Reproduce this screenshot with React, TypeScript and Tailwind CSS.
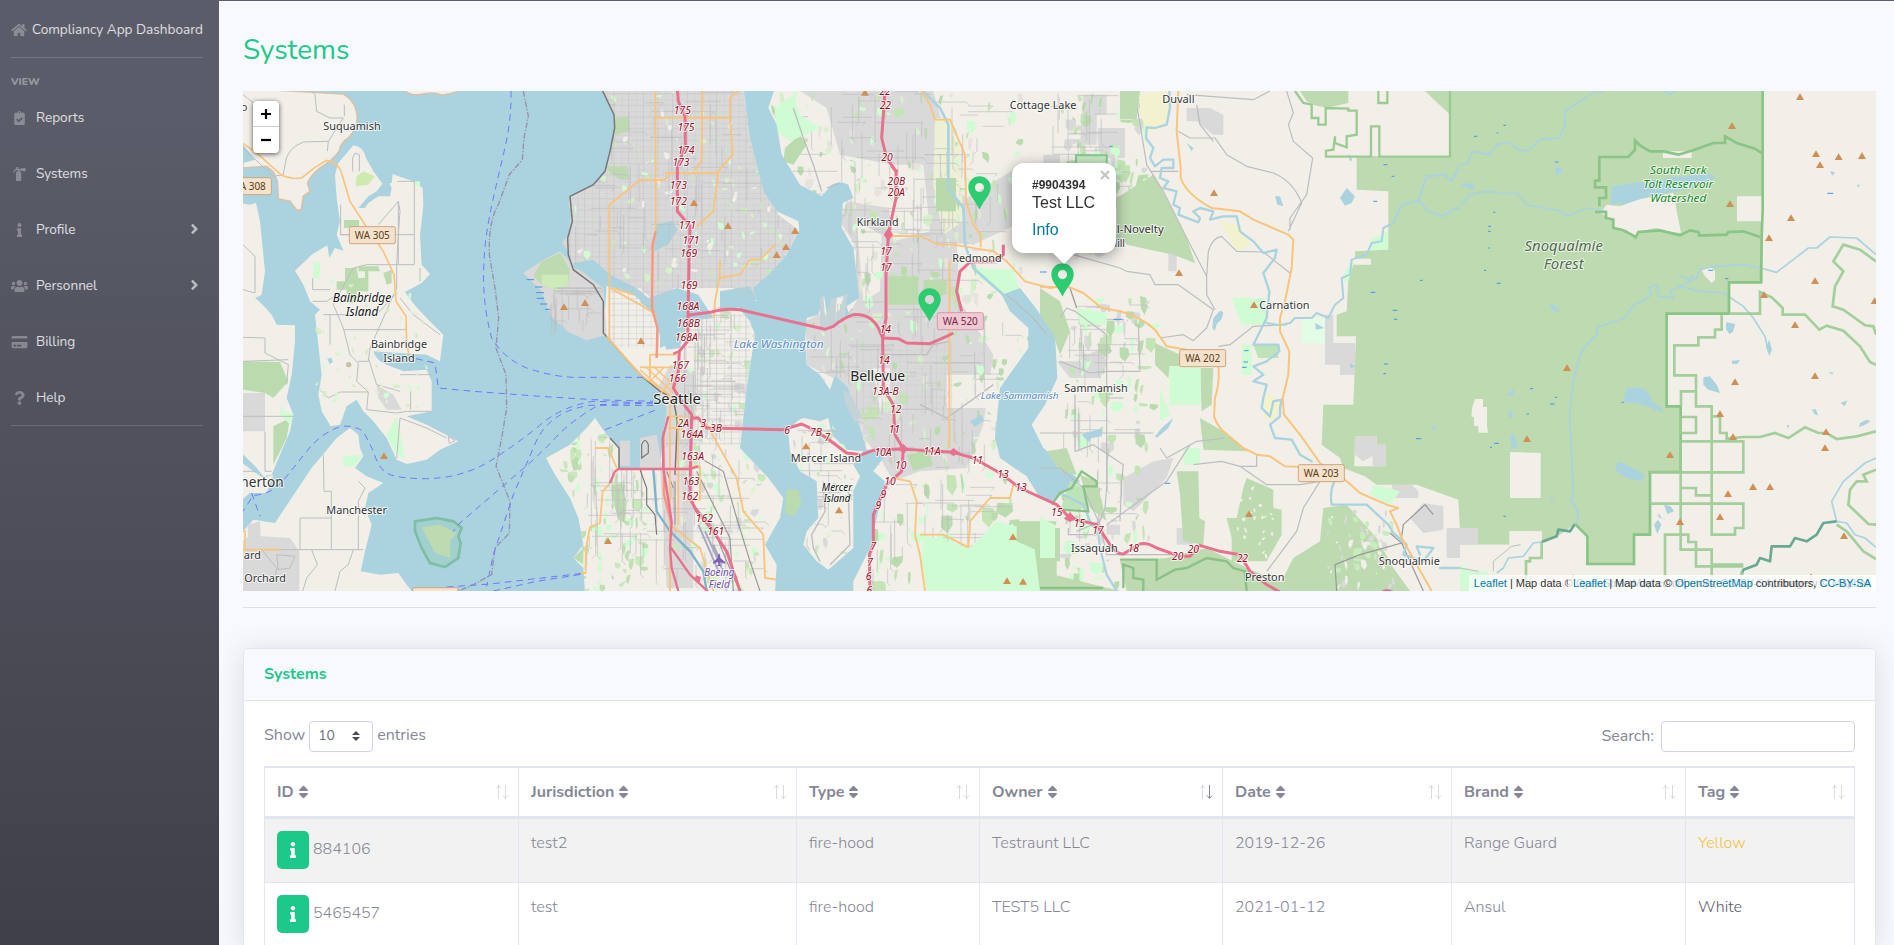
import React from "react";
import {
  FaAngleRight,
  FaClipboardCheck,
  FaCreditCard,
  FaFireExtinguisher,
  FaHome,
  FaInfo,
  FaQuestion,
  FaSort,
  FaUsers,
} from "react-icons/fa";

/* ------------------------------- Map palette ------------------------------ */
const WATER = "#aad3df";
const LAND = "#f2efe9";
const FOREST = "#bddab1";
const URBAN = "#d9d9d9";
const PARK = "#cffcd3";
const WOOD = "#b9dbae";
const STREET = "#bdbdc0";
const ORANGE = "#f9c47c";
const MOTORWAY = "#e8718d";
const BORDER = "#9bcb93";

function random(seed: number) {
  let s = seed;
  return () => {
    s = (s * 16807) % 2147483647;
    return s / 2147483647;
  };
}

type Box = [number, number, number, number];

/** Small vegetation patches spread over a box. */
function Patches({ seed, count, box, colors, size = 26 }: { seed: number; count: number; box: Box; colors: string[]; size?: number }) {
  const r = random(seed);
  const [x, y, w, h] = box;
  return (
    <g>
      {Array.from({ length: count }, (_, i) => {
        const px = x + r() * w;
        const py = y + r() * h;
        const a = 5 + r() * r() * size;
        const b = 5 + r() * size;
        const k = r() * 9 - 4;
        return (
          <path key={i} fill={colors[i % colors.length]} d={`M${px} ${py}l${a} ${k}l${k} ${b * 0.6}l${-a * 0.5} ${b * 0.5}l${-a * 0.6} ${-b * 0.4}z`} />
        );
      })}
    </g>
  );
}

/** Irregular local street segments spread over a box. */
function Streets({ seed, count, box }: { seed: number; count: number; box: Box }) {
  const r = random(seed);
  const [x, y, w, h] = box;
  let d = "";
  for (let i = 0; i < count; i++) {
    const len = 30 + r() * 110;
    const px = Math.round(x + r() * (w - len));
    const py = Math.round(y + r() * (h - len));
    const q = r() * 24 - 12;
    d += r() > 0.5 ? `M${px} ${py}h${len}l${q} ${Math.abs(q)}` : `M${px} ${py}v${len}l${q} ${Math.abs(q)}`;
  }
  return <path d={d} fill="none" stroke={STREET} strokeWidth={2.6} strokeOpacity={0.75} />;
}

type LabelProps = { x: number; y: number; size?: number; fill?: string; italic?: boolean; children: string; len?: number };

function Label({ x, y, size = 33, fill = "#333", italic, children, len }: LabelProps) {
  return (
    <text
      x={x}
      y={y}
      fontSize={size}
      fill={fill}
      fontStyle={italic ? "italic" : undefined}
      textAnchor="middle"
      textLength={len}
      lengthAdjust="spacingAndGlyphs"
      stroke="#ffffff"
      strokeOpacity={0.75}
      strokeWidth={6}
      strokeLinejoin="round"
      paintOrder="stroke"
    >
      {children}
    </text>
  );
}

function Shield({ x, y, pink, children }: { x: number; y: number; pink?: boolean; children: string }) {
  return (
    <g>
      <rect x={x - 69} y={y - 25} width={138} height={51} rx={5} fill={pink ? "#edcad4" : "#f5e2cd"} stroke={pink ? "#d999ab" : "#cfa57c"} strokeWidth={3} />
      <text x={x} y={y + 11} fontSize={30} textAnchor="middle" fill={pink ? "#7d2644" : "#5b3d12"} textLength={105} lengthAdjust="spacingAndGlyphs">
        {children}
      </text>
    </g>
  );
}

const PEAKS: [number, number][] = [
  [432, 1103], [972, 656], [1035, 644], [1203, 758], [1104, 1358],
  [1362, 344], [1464, 413], [1665, 428], [1638, 476], [1610, 500], [1698, 1074], [1797, 1266], [2319, 1346], [2301, 1478], [2349, 1480], [1875, 13],
  [2922, 314], [2817, 554], [3042, 650], [3027, 1277],
  [4680, 26], [4476, 113], [4728, 197], [4740, 230], [4796, 206], [4866, 203], [4470, 347], [4653, 389], [4587, 449], [4725, 578], [4572, 620], [4904, 638],
  [4665, 710], [3981, 839], [4725, 863], [4485, 881], [4440, 977], [4758, 1031], [4479, 1046], [4290, 1100], [3861, 1052], [4755, 1079], [4539, 1196],
  [4590, 1196], [4464, 1217], [4440, 1286], [4320, 1301], [4812, 1343], [4713, 1466], [4000, 1468],
];

const EXITS: [number, number, string][] = [
  [127, 78, "175"], [138, 128, "175"], [138, 198, "174"], [123, 233, "173"], [115, 302, "173"], [115, 352, "172"], [142, 423, "171"], [153, 467, "171"],
  [146, 507, "169"], [147, 603, "169"], [144, 665, "168A"], [145, 718, "168B"], [139, 759, "168A"], [121, 844, "167"], [112, 882, "166"],
  [130, 1016, "2A"], [190, 1016, "3"], [228, 1031, "3B"], [156, 1051, "164A"], [158, 1115, "163A"], [153, 1191, "163"], [149, 1235, "162"], [193, 1301, "162"], [227, 1342, "161"],
  [441, 1038, "6"], [528, 1043, "7B"], [562, 1059, "7"], [735, 20, "22"], [736, 63, "22"], [741, 220, "20"], [769, 290, "20B"], [769, 323, "20A"],
  [738, 502, "17"], [738, 548, "17"], [736, 736, "14"], [732, 829, "14"], [736, 920, "13A-B"], [767, 974, "12"], [763, 1034, "11"], [729, 1103, "10A"],
  [876, 1100, "11A"], [782, 1142, "10"], [750, 1190, "10"], [730, 1231, "9"], [715, 1264, "9"], [1012, 1127, "11"], [1089, 1170, "13"], [1143, 1210, "13"],
  [1250, 1283, "15"], [1318, 1318, "15"], [1374, 1338, "17"], [1480, 1393, "18"], [1613, 1415, "20"], [1660, 1395, "20"], [1807, 1423, "22"],
  [700, 1385, "7"], [690, 1433, "7"], [686, 1475, "6"], [688, 1518, "6"],
];

const NORTH_SEATTLE =
  "M1088 9L1120 80L1125 120L1110 190L1095 250L1060 290L990 325L985 350L995 370L985 440L965 465L985 490L995 530L1060 520L1110 560L1200 640L1260 655L1300 600L1480 600L1500 650L1540 640L1585 560L1640 500L1675 425L1620 385L1570 310L1530 150L1510 9Z";
const EASTSIDE =
  "M1605 9L2350 9L2350 1509L1840 1509L1890 1380L1935 1180L1900 1150L1930 1090L1860 1080L1825 900L1785 860L1770 905L1740 860L1700 830L1697 700L1735 680L1750 625L1762 700L1778 640L1815 620L1812 690L1850 640L1850 560L1840 480L1805 420L1805 350L1840 320L1820 280L1775 290L1745 325L1680 290L1625 200L1585 60Z";

function WestShore() {
  return (
    <g>
      <g fill={LAND} stroke="#d3c3ae" strokeWidth={5}>
        <path d="M0 0L310 18Q350 40 352 90Q350 125 325 150Q300 165 298 190Q275 220 240 240Q210 265 203 285L210 310L190 325L184 365L170 367L150 340L115 333L112 280L100 252L80 235L9 240Z" />
        <path d="M486 0Q505 25 540 20Q580 10 605 22Q640 18 680 0Z" />
      </g>
      <g fill={LAND}>
        <path d="M0 345L30 350L48 345L60 400L75 550L65 620L45 630Q60 640 95 680L110 710L165 712L165 760L155 860L140 930L160 980L150 1030L120 1100L95 1160L70 1165L50 1140L0 1090Z" />
        <path d="M0 1120L40 1150L70 1170L100 1160L80 1215L30 1215L0 1240Z" />
        <path d="M340 172Q370 175 378 210L400 250L430 290L455 285L458 258L475 265L520 280L548 300L550 350L545 400L540 440L545 530L570 558L545 585L495 612Q520 650 560 690L610 740L600 820L560 800L400 790Q410 820 440 830L490 850L560 845L575 880L575 970L500 985L560 1010L655 1060L600 1085L560 1115L500 1128L470 1115L440 1050L400 1000L370 970L350 935L320 955L300 1010L272 1015L245 970L235 920L245 860L225 680L240 665L210 640L190 590L165 548L215 500L262 472L268 510L285 480L310 488L290 440L300 400L290 330L285 260L295 225Z" />
        <path d="M0 1340L40 1295L105 1305L155 1230L215 1140L290 1050L330 1020L355 1040L360 1080L370 1105L345 1140L380 1165L430 1185L385 1215L375 1260L395 1310L375 1390L362 1450L420 1460L475 1455L500 1490L520 1515L0 1515Z" />
      </g>
      <path fill={WATER} d="M355 360L385 325L410 310L440 270L455 300L450 325L415 325L385 345L375 360ZM9 170L30 195L45 215L9 225ZM262 812l12 -3l5 12l-10 8z" />
      <g fill={WOOD}>
        <path d="M312 396h45v24h-45zM315 540h35l5 30h20v-20h-20v-15h60l5 15h-35v60h-35v35h-30v-40h-30v-25h25zM430 555l25 -10v40l-15 5z" />
        <path d="M9 820L120 822L145 880L100 930L75 915L9 905ZM100 1015L150 990L140 1050L100 1130Z" />
      </g>
      <g fill={PARK}>
        <path d="M220 522h20v50h-20zM470 985l25 130l-30 -20l-25 -55zM120 960l40 20l-10 30l-30 -30zM310 1105l60 -5l-30 35l-30 0zM42 1405l45 0v60h-45zM525 280h15v15h-15z" />
        <path fill="#cdebb0" d="M350 265l20 -15l35 15l-20 25l-38 5z" />
      </g>
      <path fill={URBAN} d="M410 890L460 920L485 965L440 965L415 930ZM9 915L75 915L75 1030L9 1030ZM22 1310L60 1300L62 1345L150 1350L178 1390L178 1509L9 1509L9 1360L25 1345Z" />
      <g fill="none" stroke={STREET} strokeWidth={3}>
        <path d="M9 20L60 60M215 9L225 20L230 70L270 90L310 90M262 190L265 160L190 162Q140 180 135 230L130 260L100 265L9 180M313 50V85M265 160L310 90" />
        <path d="M9 470L45 505L45 615M9 605L45 615M9 748L75 750V795L145 830L140 890M9 820L145 815M9 985L160 985M75 1030V1150L95 1150" />
        <path d="M338 250V210L345 195L358 200V250M472 280H523V530H475V340L415 410M302 350V440H523M302 440H340M475 340L480 370L475 440L470 530L470 620M475 530L380 530L340 540L280 650L310 720L330 800L355 825L350 880L385 912L380 965L470 975L500 970L575 970M218 605V570M218 605H270M218 640H260L290 620M270 680V770M250 680H410L465 620M310 725H500M355 820H385L390 780L430 690L465 610M540 540V580M480 630L520 680L600 740M385 810L410 890L480 910M480 860H575M512 910V965M240 905L265 930L300 912H385M480 990L560 1020L620 1050M480 990L470 1110M625 1045L645 1057L628 1067Z" />
        <path d="M250 1100L252 1210H274V1385M180 1385V1290H274M9 1385H370M215 1385L232 1430L200 1470L188 1509M340 1385L325 1430L300 1450L285 1509M355 1180L375 1200L355 1240L355 1385M65 1385L110 1440L105 1480M9 1150L50 1150M110 1400L165 1405L150 1440L115 1445Z" />
      </g>
      <Patches seed={41} count={60} box={[225, 560, 330, 400]} colors={["#d5ecc6", PARK, "#e3efd4"]} size={14} />
      <g fill="none" stroke={ORANGE} strokeWidth={5}>
        <path d="M0 160L50 195L125 262Q160 275 185 270L225 238L260 217Q295 225 303 250L330 340L375 410L430 490L462 560L468 640L498 685L500 770L507 800M0 1385H120M0 1330H15V1385" />
      </g>
      <circle cx={326} cy={830} r={8} fill="#c6c3a3" />
      <path fill="#a2d0ce" stroke="#7fbda6" strokeWidth={8} d="M525 1300L590 1290L640 1300L665 1320L655 1345L662 1365L655 1410L615 1437L570 1425L545 1380L525 1330Z" />
      <path fill={FOREST} d="M545 1318L600 1310L650 1335L630 1360L632 1410L585 1395Z" />
    </g>
  );
}

function Seattle() {
  return (
    <g>
      <path fill={URBAN} d={NORTH_SEATTLE} />
      <path
        fill={LAND}
        d="M1100 590L1200 600L1260 655L1260 780L1320 750L1320 620L1480 600L1530 640L1550 740L1520 900L1500 1080L1585 1170L1630 1230L1620 1290L1575 1370L1610 1430L1605 1515L1035 1515L1030 1440L1000 1410L1030 1370L1015 1290L990 1230L945 1160L918 1110L990 1070L1040 1020L1065 990L1100 1040L1137 1075L1137 1140L1260 1140L1270 1030L1285 960L1250 905L1130 780L1090 740Z"
      />
      <path fill={URBAN} d="M960 490L910 515L850 555L905 610L930 680L980 730L1040 757L1100 740L1090 600L1000 530ZM1250 905L1290 830L1360 850L1360 1500L1280 1500L1260 1140L1200 1140L1200 1050L1250 1040L1265 1130L1280 960ZM1140 1058h30v75h-30z" />
      <path fill="#e8dbe6" d="M1275 1080L1320 1060L1330 1330L1290 1310Z" />
      <path fill={WATER} d="M1198 640L1310 600L1375 620L1420 690L1345 700L1330 740L1320 780L1280 785L1255 730L1245 680ZM1245 410l50 -10l18 25l-30 45l-40 20zM1440 610l90 -15l20 40l-60 25l-50 0zM1000 525L1060 515L1110 560L1190 600L1260 660L1240 670L1180 620L1120 600L1090 590L1060 560L1000 540Z" />
      <path fill={FOREST} d="M905 520L960 495L990 545L985 590L950 608L905 590L880 565Z" />
      <path fill="#cfeab9" d="M905 560L985 560L985 590L950 608L905 590Z" />
      <path fill={FOREST} d="M1125 90l40 -5l5 45l-45 10zM1100 235l60 0l10 40l-30 0l-30 -20zM990 1108l30 -5l5 40l-25 5zM1115 1190l30 -5l15 60l-5 60l-20 -10l-20 -70zM1640 1205l35 0l10 40l-25 40l-25 -10zM1000 1410L1030 1380V1430Z" />
      <clipPath id="north">
        <path d={NORTH_SEATTLE} />
      </clipPath>
      <g clipPath="url(#north)">
        <rect x={960} y={9} width={720} height={640} fill="url(#grid)" />
        <Patches seed={7} count={150} box={[980, 9, 680, 620]} colors={["#c9e8bb", PARK, "#f2efe9", "#d7f0cc"]} size={18} />
        <Streets seed={8} count={90} box={[980, 9, 690, 620]} />
      </g>
      <g clipPath="url(#seattleSouth)">
        <Patches seed={17} count={110} box={[960, 1030, 250, 480]} colors={["#c9e8bb", PARK, "#bfe0b2"]} size={28} />
        <Patches seed={18} count={170} box={[1300, 660, 260, 850]} colors={["#c9e8bb", PARK, URBAN, "#dff3d0"]} size={26} />
        <Streets seed={19} count={110} box={[1040, 1040, 540, 470]} />
        <Streets seed={20} count={80} box={[1330, 640, 200, 460]} />
        <rect x={1360} y={680} width={170} height={390} fill="url(#grid)" />
        <rect x={1110} y={600} width={150} height={180} fill="url(#grid)" />
      </g>
      <Streets seed={21} count={26} box={[930, 600, 160, 140]} />
      <g stroke="#777" fill="none" strokeWidth={4.5}>
        <path d="M1088 9L1122 80L1124 120L1110 190L1095 250L1060 290L990 325L997 400L983 450L985 500L1000 545L1060 590L1090 640V735L1130 780L1200 860L1260 910L1300 930L1312 1000L1305 1160M1137 1140V1080L1110 1050" />
        <path strokeWidth={3.5} d="M1200 1145L1220 1200V1250L1245 1280L1250 1340M1205 1070Q1215 1045 1225 1070V1095L1205 1110Z" />
        <path stroke="#999" d="M1380 1110L1450 1150L1490 1290L1530 1420L1560 1509M1370 1150L1470 1350L1480 1509M1340 1170L1360 1250L1420 1320L1460 1420L1500 1509M1280 1150L1300 1200M1305 1180V1310" strokeWidth={3.5} />
        <path stroke="#aaa7c4" strokeWidth={6} d="M1375 1310L1440 1460M1395 1330L1450 1450M1420 1370L1445 1430" />
      </g>
      <path fill="none" stroke="#7eb4cb" strokeWidth={7} d="M1240 1145L1250 1270L1290 1330L1350 1390L1390 1450L1400 1509" />
      <g fill="none" stroke={ORANGE} strokeWidth={5.5} strokeLinejoin="round">
        <path d="M1246 9L1247 430M1260 276H1200L1108 350V760M1110 600L1200 650L1250 680M1100 745L1200 860L1290 920V1509M1246 88L1470 90M1387 9L1385 220L1365 245M1470 90V30L1505 0M1470 90L1478 200L1435 250L1420 370L1370 415M1275 255L1435 255M1260 276H1275L1290 255M1440 515L1438 570L1500 560L1530 515L1560 515L1605 470M1438 570L1425 640L1422 690M1120 600L1180 620M1230 800H1310M1230 800V870M1200 838H1320M1370 985L1400 1010L1490 1170L1510 1270L1570 1340L1575 1470L1650 1480L1670 1509M1285 985H1340M1285 1020H1330M1340 1135H1380V1235L1340 1240M1315 990V1310M1290 1310L1380 1380L1420 1509M1065 1080H1105L1130 1140M1110 1185L1088 1210L1080 1305L1050 1318L1038 1380L1037 1455H1020" />
        <path strokeWidth={4} d="M1200 845L1290 925M1215 835L1300 915M1240 835L1310 900M1260 920L1320 845M1230 880L1270 840" />
      </g>
      <path fill="none" stroke="#ff957c" strokeWidth={7} d="M1247 430L1238 470L1236 660L1252 720L1250 810M1270 1030L1272 1220L1295 1310" />
    </g>
  );
}

function EastSide() {
  return (
    <g>
      <clipPath id="east">
        <path d={EASTSIDE} />
      </clipPath>
      <g clipPath="url(#east)">
        <path fill={URBAN} d="M1680 9L2080 9L2110 120L2080 240L2180 330L2330 240L2350 400L2200 470L2150 460L2160 640L2260 800L2230 1010L2180 1140L2040 1150L1960 1180L1920 1110L1830 1000L1800 880L1700 830L1690 690L1840 660L1850 480L1800 400L1820 340L1950 360L1960 230L1800 200L1760 60Z" />
        <path fill={LAND} d="M1850 400L1925 440L1920 610L1870 640ZM1930 230h120l20 200l-110 30zM1900 840h50v90l-30 40zM2120 860h170v100h-170z" />
        <path fill="#eef0d5" d="M2085 90h45l30 90l10 220l-60 40l-30 -150z" />
        <Patches seed={3} count={330} box={[1590, 9, 760, 1140]} colors={["#c4e4b6", PARK, WOOD, "#e6e3dd", "#d7f0cc"]} size={32} />
        <Patches seed={4} count={60} box={[1870, 1150, 470, 360]} colors={["#c4e4b6", WOOD, PARK]} size={50} />
        <Streets seed={5} count={240} box={[1610, 9, 740, 1180]} />
        <Streets seed={6} count={50} box={[1850, 1170, 480, 340]} />
        <rect x={1860} y={760} width={280} height={220} fill="url(#grid)" opacity={0.6} />
      </g>
      <path fill={WOOD} d="M1945 565h90v85h-90zM2050 575h70v45h-70zM1635 180l45 -40l20 30l-40 60l-30 -10zM2360 750l40 -60l20 60l-25 70zM2000 1100l60 -10l20 40l-60 20z" />
      <path fill="#b9d9ad" d="M2088 270h60v100h-60z" />
      <path fill={PARK} d="M1605 60L1660 20L1680 80L1740 120L1650 160L1610 130ZM2200 540L2320 545L2340 610L2280 615L2220 570ZM2050 1340L2190 1380L2270 1300L2420 1340L2420 1509L2060 1509L2045 1420Z" />
      <path fill={WOOD} d="M2330 1300h120l-30 100l-90 -40zM2380 1350h70v160h-50z" />
      <path
        fill={WATER}
        d="M2285 620L2340 600L2380 650L2445 740L2452 870L2415 950L2375 1010L2410 1080L2490 1150L2520 1180L2470 1215L2430 1245L2400 1230L2360 1165L2280 1110L2265 1050L2280 900L2365 780L2365 720L2310 670Z"
      />
      <path fill={WATER} d="M2190 1000l35 -20l5 18l-25 20zM2120 700l20 -10v20z" />
      <path
        fill={WATER}
        d="M1510 0L1605 0L1585 60L1610 110L1625 200L1680 290L1745 325L1775 290Q1800 275 1825 290L1840 330L1808 345L1805 420L1840 480L1850 560L1857 630L1820 655L1830 690L1812 690L1820 620L1790 630L1780 700L1762 690L1752 622L1735 680L1700 690L1695 760L1700 830L1740 860L1770 905L1785 860L1825 900L1840 960L1860 1020L1880 1085L1940 1080L1930 1110L1900 1150L1935 1180L1910 1290L1890 1380L1840 1480L1840 1515L1605 1515L1610 1430L1575 1370L1620 1290L1630 1230L1585 1170L1500 1080L1520 900L1545 740L1530 700L1480 640L1475 605L1550 640L1540 600L1585 560L1640 500L1678 425L1675 400L1610 370L1570 310L1530 150Z"
      />
      <path fill="#c4d3d6" d="M1740 630l10 -8l5 70l20 -60l15 -5l-5 75l30 -85l5 5l-10 80l-70 20zM1810 905l25 20l30 60l-20 20l-30 -60z" />
      <path fill={LAND} d="M1645 1035Q1660 1000 1690 990L1740 1000L1765 990L1775 1040L1820 1085L1870 1090L1840 1130L1860 1165L1840 1210L1840 1380L1765 1445L1730 1420L1690 1370L1700 1330L1735 1290L1730 1180L1680 1150L1650 1090Z" />
      <g clipPath="url(#mercer)">
        <Patches seed={12} count={46} box={[1650, 990, 190, 440]} colors={["#c9e8bb", PARK, URBAN]} size={24} />
        <Streets seed={13} count={26} box={[1660, 1000, 190, 430]} />
      </g>
      <path fill="none" stroke={STREET} strokeWidth={4} d="M1740 1420L1720 1380L1715 1340L1755 1270L1750 1180M1825 1210L1830 1370L1770 1430M1660 60L1690 150L1720 230L1745 310M1760 300L1800 285M1920 800H2060L2080 770L2130 760M2040 950L2120 990L2260 890M2300 620L2380 690L2420 740" />
      <path fill={WOOD} d="M1640 1205l35 0l10 40l-25 40l-25 -10z" />
      <path fill="none" stroke={WATER} strokeWidth={8} d="M2040 0L2100 60L2125 110L2125 300L2170 360L2175 470L2200 540L2290 620" />
      <g fill="none" stroke={ORANGE} strokeWidth={5.5} strokeLinejoin="round">
        <path d="M2040 0L2070 50L2085 95H2130L2175 200L2178 340L2200 410L2222 440V478M1955 444H2040L2095 470H2140L2260 490L2300 520L2355 580L2430 600L2460 596M2128 520V1080M1960 1170L2010 1180L2030 1240L2025 1340L2040 1400L2055 1509M2040 1340L2110 1340L2185 1378L2190 1300L2250 1230L2310 1230L2320 1190" />
      </g>
    </g>
  );
}

/* Drawn in the coordinates of the eastern half, 2400 units from the origin. */
function Foothills() {
  return (
    <g transform="translate(2400 0)">
      <g fill={URBAN}>
        <path d="M130 20h70v60h-30v90h-50zM440 60h70l40 20v60h-30l-50 -40h-30zM175 120h80v90h-80zM10 200h50v90h-50zM385 490h25v60h-25zM140 800l50 -20l10 50l-20 40h-90l-40 -50h80zM855 680h25v85h65v95h-45v-30h-45zM1055 1190h60l20 20v20h-70zM1110 1290l40 -45l60 10v70l-60 10zM250 1170l90 -50l60 -10l-20 60l-100 100l-30 -20zM410 1320h50v50h-50zM200 1310h40v30h-40zM1220 1320h60v90h-60zM170 650h40v10h-40z" />
      </g>
      <Patches seed={31} count={90} box={[60, 9, 260, 480]} colors={["#c4e4b6", WOOD, PARK, URBAN]} size={46} />
      <Patches seed={32} count={130} box={[60, 620, 270, 880]} colors={["#c4e4b6", WOOD, PARK, URBAN]} size={42} />
      <Streets seed={33} count={50} box={[10, 9, 280, 500]} />
      <Streets seed={34} count={50} box={[70, 640, 250, 760]} />
      <g fill={FOREST}>
        <path d="M240 9h60l-10 85h-50zM230 330L340 260L400 370L440 450L465 525L400 500L260 470L230 420ZM0 600L60 640L90 730L60 800L40 740L0 680ZM345 765L420 800L430 835L390 835L385 870L345 830ZM480 840h40l-5 110l-30 20zM480 990L550 1030L620 1090L490 1085ZM410 1150H475L478 1290L495 1300L490 1370L430 1360L420 1220ZM620 1170L700 1205V1260L725 1265V1340L680 1420H575V1350L560 1290H590L610 1200ZM20 1090L80 1080L110 1160L60 1150ZM120 1160L170 1180L200 1300L150 1260ZM850 1260L920 1250L1010 1350L1060 1440L1110 1509H710L760 1410L840 1360ZM240 1420L380 1410L500 1380L620 1440L720 1480L740 1509H260Z" />
        <path d="M0 1320h60v100h-60zM0 1450L240 1509H0Z" />
      </g>
      <Patches seed={35} count={22} box={[590, 1190, 120, 210]} colors={[LAND]} size={8} />
      <Patches seed={36} count={60} box={[860, 1260, 200, 230]} colors={[URBAN, "#c6edbb", LAND]} size={22} />
      <g fill={PARK}>
        <path d="M388 835h94v115h-94zM575 630h100v-30v60l10 50h-80zM605 770h30v90h-30zM110 660l90 15v35h-80zM430 1080h50v50h-50zM360 900l30 80l-30 20zM1045 430v55h-55v-30zM940 515v65h-30v-20zM1000 1190l80 20l-30 40l-60 -30zM0 1290l45 20v100h-45z" />
        <path fill="#e2fce5" d="M785 690h70v75h-70z" />
        <path fill="#c8eac4" stroke="#84c98f" strokeWidth={6} d="M108 202h92v60h-92z" />
        <path fill="#f3f2cf" d="M300 20L390 9L385 100L330 140L300 80ZM670 910l60 30l-30 60l-30 -10zM540 400l60 10l30 60l-40 20z" />
        <path fill="#bfe3b8" d="M640 770h75v40h-60zM90 1180l40 20l10 60l-80 10z" />
      </g>
      <g fill="none" stroke={STREET} strokeWidth={3.6} strokeLinejoin="round">
        <path d="M292 60L320 230L370 310L440 450L500 565L505 490Q515 450 545 445L590 490L670 492L750 555M415 130L450 150H525L560 200L620 235L700 255Q760 280 785 345L745 430M330 250H415M740 9L760 75L745 110L760 160L818 210L800 320L750 390V425M470 50L480 110L520 160M440 20L640 35L690 9M100 500L240 540L260 550L330 560L345 590L415 590L520 665L500 720L460 758L430 740L360 750M535 775L570 770L640 715L740 710M500 565V620L525 665M60 690L80 660L105 670L200 740V1200L195 1260L180 1300L110 1330M105 920V1090L160 1070L250 1130L245 1180L240 1300M200 850H300M200 930H250M0 1035H340M295 710L300 850M360 1080L380 1110L470 1060L555 1050M460 1130L545 1120L600 1135H650V1100M600 1135L680 1190H780L840 1180L790 1260L770 1330L680 1450M130 770V850M60 820L150 855L200 850M0 1140H60L130 1200L180 1310L200 1400H420M200 1310L380 1180L450 1070M85 1320V1340H170" />
        <path stroke="#999" d="M890 1509L885 1430L960 1400L1085 1365L1150 1509M1050 1335L1090 1370M1085 1345L1090 1310L1155 1250L1180 1280M90 600L110 660" />
      </g>
      <g fill="none" stroke={WATER} strokeWidth={7} strokeLinejoin="round" strokeLinecap="round">
        <path d="M388 9L390 60L380 110L345 120L320 118L318 150L340 180L330 210L345 235L370 215L400 215V240L365 240L360 270L385 280L370 300L410 310L400 350L420 360L415 380L475 403L480 390L460 370L480 360L520 370L510 395L550 385L590 385L600 430L640 460L670 495L710 485L705 510L670 555L688 610L680 690L650 750L640 770L715 770L718 790L680 820L640 835L670 860L640 880L680 890L670 930L665 960L690 985L700 940L725 935L720 960L720 985L690 1010L705 1050L755 1055L780 1100L815 1120" />
      </g>
      <g fill={WATER}>
        <path d="M900 330l20 -30l25 25l-10 20l-20 8zM520 690l20 -22l10 5l-5 20l-15 15l-5 20l-8 -8zM125 1040l60 -20v25l-30 5l-10 12zM345 1045l20 -25l35 -30l-15 30l-35 30zM705 325l15 0l10 30l-18 -5zM825 705l28 15l-25 5zM440 165l20 15l-5 10z" />
      </g>
      {/* Snoqualmie Forest */}
      <path fill={FOREST} d="M950 205L1000 204L1230 205L1230 0L1300 0L1300 1370L1262 1370L1255 1235L1130 1190L1010 1190L975 1165L910 1140L900 1110L845 1070L850 950L940 950L948 745L890 745L890 680L920 670L925 580L940 530L993 530L993 512L945 512L945 490L1045 485L1045 310L950 305Z" />
      <path fill={FOREST} d="M780 9L925 9L925 45L860 60L820 50L800 40ZM1155 9L1230 9L1230 80Z" />
      <path fill={URBAN} d="M890 765h55v95h-45v-30h-10z" />
      <path fill={LAND} d="M945 1045h65v25h28v65h-95z" />
      <path fill={URBAN} d="M945 1045h65v25h28v65h-40v-30l-30 15l-23 -20z" />
      <g fill="none" stroke={WATER} strokeWidth={6} strokeLinejoin="round" strokeLinecap="round">
        <path d="M680 705L720 712L750 705L765 690L815 690L830 675L865 690L885 650L910 630L905 570L930 560L935 515L980 500L995 465L1025 460L1030 420L1060 405L1085 350L1135 338L1160 265L1215 260L1235 280L1260 235M1135 338L1165 370L1210 385L1245 360L1260 362" />
        <path strokeWidth={7} d="M900 1160Q865 1190 875 1250L980 1250L1045 1310L1060 1335L1100 1370L1090 1400L1150 1420L1180 1380L1130 1375L1140 1400M1200 1440L1260 1440M70 1220L130 1250L150 1300L175 1340L180 1380L200 1460L230 1509" />
      </g>
      <path fill={WATER} d="M930 825l18 12l-18 3zM1170 1015l22 5l-12 8zM925 195l12 22l-8 2z" />
      <path fill="none" stroke="#3f97f0" strokeWidth={3} d="M1030 230h12M1055 265h8M1000 340h12M992 613h14M1140 577h8M1058 667h14M1062 694h10M1032 828h12M1030 857h8M1128 1052h16M220 694h28M375 1186h16M612 788h14M610 822h14M606 838h14M0 552h20M208 175h10" />
      <g fill="none" stroke={BORDER} strokeWidth={7}>
        <path d="M765 9L790 45L815 50V90H835V110H857V60L925 62V68H950V140L920 145V178L885 165V145L880 185L858 188V206H993V115H1018V206H1230V9M1015 9V45H1042V9" />
        <path d="M35 1250L60 1215L95 1200L125 1150L170 1180V1195L130 1195L145 1270L60 1265M240 1415L350 1415V1475L405 1445L440 1440L500 1410L560 1420L580 1440L615 1450L620 1509M250 1500V1430L280 1440V1470L310 1475V1509M0 1500H190" stroke="#8ac187" />
      </g>
      <g fill="none" stroke={ORANGE} strokeWidth={6} strokeLinejoin="round">
        <path d="M415 9L410 130L422 240V270Q440 320 515 360L600 370L640 395L745 440L760 455L755 540L735 640L720 690V730L748 790L745 860L728 930L732 980L780 1040L840 1125L915 1175L960 1215L1040 1250L1075 1260L1050 1270L1070 1310L1085 1350L1175 1509" />
        <path d="M0 596L90 598L130 615L185 660L240 670Q300 685 345 725L380 775L440 785M535 835Q540 880 525 930L522 985Q530 1010 550 1030L610 1080L650 1100L690 1105L735 1135L790 1137" />
      </g>
    </g>
  );
}

/* Drawn in the coordinates of the eastern edge, 3660 units from the origin. */
function EasternForest() {
  return (
    <g transform="translate(3660 0)">
      <path fill={FOREST} d="M0 0H908V583H807V677H620V955H662V1152H570V1340H522V1428H382V1345L345 1308L300 1340L245 1362V1330H148V1370H0Z" />
      <g fill={LAND}>
        <path d="M150 1092L242 1095V1230H150ZM45 933h24v24h12v55l3 22h-28l-2 -20h-12v-28h-8l3 -30zM609 190h86v20h-86zM831 325h76v75h-76zM725 545l25 -10l15 15v25l-10 10l-20 -20zM420 375L440 350L480 355L530 335L640 315L663 435L620 430L590 420L540 430L520 445L500 425L462 420L460 395Z" />
      </g>
      <path fill={URBAN} d="M0 1320h54v50h-54z" />
      <path fill={LAND} d="M0 1370h150v-40h95v140l-50 10v30H0z" />
      <path fill={PARK} d="M0 1430L40 1450L80 1450L110 1509H0Z" />
      <g fill="none" stroke={WATER} strokeWidth={5} strokeLinejoin="round">
        <path d="M0 230L25 225L35 190L90 200L110 170L145 163L180 188L205 187L240 155L298 150L315 110V70L350 45L410 9L430 12M610 9L630 18L650 9M0 355L30 320L80 310L120 315L170 315L200 350L305 370L320 385L385 360L440 370M1248 500L1190 450L1110 447L1070 480L1045 480L950 553L900 540L850 530L760 535L720 545L710 570L660 595L630 610L640 630L595 625L590 590L565 600L575 620L545 640L520 650L495 690L410 718L412 740L380 770L360 800L340 880L328 980L335 1100L340 1230L330 1240L345 1250L355 1280L350 1310M660 595L720 610L790 615L850 655L880 690L915 745L925 790M110 1455L130 1440L145 1410L190 1405L220 1365L245 1362M1248 1110L1215 1125L1150 1180L1115 1240L1130 1300L1160 1305L1185 1340L1215 1350L1248 1378M655 560L690 575L700 560" />
        <path stroke="#69a994" strokeWidth={8} d="M245 1362L290 1345L295 1325L330 1330L345 1308M845 1460L850 1445L890 1430L900 1410L930 1420L935 1375L990 1375L1005 1350L1040 1360L1070 1340L1090 1305L1130 1300" />
      </g>
      <g fill={WATER}>
        <path d="M455 295L560 280L620 270L700 262L755 258L765 270L700 300L620 315L550 330L490 350L475 345L452 350ZM5 285L40 288L45 305L30 300L8 295ZM285 240l20 -5v20l-15 8zM268 652l10 -3l20 15l-3 8l-20 -5zM500 900L545 898L570 920L575 940L605 960L612 975L560 955L525 945L490 943ZM465 1130L480 1122L555 1160L545 1180L500 1170L470 1150ZM730 868L750 865L770 890L780 915L745 905L730 890ZM798 703l28 5l-8 25l-10 5l-10 -15zM815 818l25 -2l-8 12l-15 0zM918 775l10 -20l8 30l-8 20zM140 920l20 -18v25zM145 965l12 5v20l-10 0zM150 1040l12 -5l12 48l-20 -5zM270 1235l8 -14v18zM612 1250l20 5l10 15l-20 8zM595 1275l10 15l20 8l-30 -10zM582 1310l12 -15l10 15l-12 28zM1110 250l15 3l-8 10zM1190 292l10 -3l-5 10zM1142 945l20 -8l-8 18zM1055 965l12 -2l8 20l-12 -5zM1200 1005l20 -10l12 5l-20 12l-15 5zM980 1010l8 2l-3 10zM1105 852l16 2l-5 6z" />
      </g>
      <g fill="none" stroke={BORDER} strokeWidth={8} strokeLinejoin="miter">
        <path stroke="#8bc487" d="M908 9V365L905 445L903 583H807V677H620V955H662V1152H570V1340H522V1428H382V1345L345 1308" />
        <path stroke="#8bc487" d="M418 355V330H438V298H405V278H418V207H505L525 185V158L540 172L570 190H610L655 200L695 188L760 165H795V145L830 165L885 182L905 195M405 372H438V390L460 395V420L485 425L515 440L527 448L535 432L600 427L660 442L690 427L715 432L718 443L800 440L805 432L850 430L900 447" />
        <path opacity={0.9} d="M807 677H900V612L935 628L968 660V680H1035L1078 725L1100 713L1150 728L1200 775L1230 822L1248 830M785 682V725H765V748H715V772H643V862H708V955H755V1340H825V1320H850V1247H570M663 955V910H708M662 987H708V1035H662V985M755 985H780V1035H800V1052L850 1047L900 1047L945 1035L985 1050L1035 1018L1075 1035H1100L1130 1053L1190 1045L1248 1030M662 1060H850V1153H570M662 1060V1385H755V1430H850M662 1200H708V1222H755M615 1509V1340H685V1362H708V1385M755 1385V1509M708 1385V1435H850M245 1362V1410H210V1420H198V1509M845 1509V1450M1130 1310L1160 1330L1210 1390L1248 1413M1248 1310L1225 1308L1165 1250L1170 1205L1190 1180H1220L1210 1160L1248 1145M1248 740L1240 715L1215 712L1150 665L1118 655L1125 595L1150 550L1120 520L1150 470L1200 485L1248 520" />
      </g>
      <path fill="none" stroke="#3f97f0" strokeWidth={3} d="M42 145h10M285 222h10M110 586h12M84 430h8M84 480h6M72 547h6M270 948h14M210 902h9M200 978h7M285 928h7M103 1066h14M90 1078h6M745 547h14M795 572h10M1102 316h18M485 943h6M85 415h8M100 373h6M110 135h5M130 112h8M130 1285h8" />
      <path fill="none" stroke={STREET} strokeWidth={3} d="M100 1450V1420L155 1375L182 1370M0 1440L55 1450" />
    </g>
  );
}

function Roads() {
  return (
    <g transform="translate(1200 0)" fill="none" stroke={MOTORWAY} strokeWidth={9} strokeLinejoin="round">
      <path d="M112 0L115 40L135 85L136 170L112 240V370L150 415L147 520L143 760L118 790L115 850L100 900L125 940L155 980L152 1100L150 1230L170 1270L220 1330L260 1390L300 1509" />
      <path d="M155 990L175 990L200 1020L430 1025L485 1008L520 1025L560 1050L620 1095L665 1100L700 1087L780 1083L940 1093L1000 1110L1080 1155L1140 1200L1250 1250L1290 1290L1370 1310L1410 1370Q1430 1400 1450 1398L1500 1368Q1520 1362 1550 1380L1620 1405H1650L1680 1372L1740 1390L1800 1400L1830 1450L1880 1490L1920 1512" />
      <path d="M735 9L725 150L740 210L768 250V330L745 440L738 560L738 690L728 750L730 900L760 950L765 1040L790 1083L785 1150L740 1190L700 1280L700 1370L688 1400L690 1512" />
      <path d="M143 682L215 672Q250 660 300 665L555 724L580 715Q610 690 640 680Q690 675 715 720L728 750L775 752L800 765L870 767L920 745L940 735M965 670L950 610L960 550L990 522L1060 520L1090 500V470" />
      <path d="M-90 1185L-75 1150L-65 1143L150 1143L175 1135M85 985L68 1050L70 1140L95 1300L90 1380L95 1440L115 1509M90 1375L150 1460L205 1512M118 790L100 797" strokeWidth={7} />
      <path fill={MOTORWAY} strokeWidth={0} d="M745 420l14 20l-14 20l-14 -20zM750 235l25 12l-5 12zM790 1068l15 15l-15 15l-15 -15zM940 1080l20 14l-20 10l-15 -10zM1290 1272l18 20l-18 10l-18 -10zM168 1462l15 5l-5 20l-15 -10zM2220 1512q20 -18 45 0z" />
    </g>
  );
}

function Ferries() {
  return (
    <g fill="none" stroke="#6f77ff" strokeWidth={3} strokeDasharray="20 15">
      <path d="M813 9Q815 100 790 200L760 330Q735 440 732 520Q725 640 755 750Q790 810 860 840Q950 870 1020 868H1210" />
      <path d="M528 812L585 825L595 900L700 910L900 925L1060 935L1240 940M1240 945L1060 940Q960 955 890 1020Q800 1090 740 1125Q660 1170 560 1172Q470 1172 440 1155Q415 1140 400 1090L370 1030Q330 1005 290 1020Q240 1040 200 1090L140 1165Q100 1220 40 1222L9 1270M35 1215L60 1285" />
      <path d="M1240 952L1050 952Q920 970 880 1080L820 1220L760 1400L740 1495M1240 945L1080 950Q1020 980 960 1035Q900 1100 840 1150L660 1305L640 1330M1095 1025L1250 965M620 1497L750 1488L1035 1455M760 1509L890 1480L1030 1458" />
    </g>
  );
}

function Labels() {
  return (
    <g>
      <Label x={336} y={126} len={172}>Suquamish</Label>
      <Label x={12} y={68}>o</Label>
      <Label x={366} y={641} italic fill="#111" size={36} len={175}>Bainbridge</Label>
      <Label x={366} y={683} italic fill="#111" size={36} len={98}>Island</Label>
      <Label x={477} y={780} len={168}>Bainbridge</Label>
      <Label x={477} y={822} len={94}>Island</Label>
      <Label x={350} y={1278} len={182}>Manchester</Label>
      <Label x={66} y={1197} size={42} len={130}>nerton</Label>
      <Label x={37} y={1413} len={51}>ard</Label>
      <Label x={75} y={1482} len={125}>Orchard</Label>
      <Label x={1311} y={949} size={43} fill="#222" len={143}>Seattle</Label>
      <Label x={1913} y={879} size={43} fill="#222" len={165}>Bellevue</Label>
      <Label x={1913} y={413} len={125}>Kirkland</Label>
      <Label x={2211} y={521} len={148}>Redmond</Label>
      <Label x={1758} y={1121} len={211}>Mercer Island</Label>
      <Label x={1791} y={1208} italic fill="#111" size={32} len={91}>Mercer</Label>
      <Label x={1791} y={1243} italic fill="#111" size={32} len={80}>Island</Label>
      <Label x={1438} y={1465} italic fill="#6b53a8" size={31} len={91}>Boeing</Label>
      <Label x={1438} y={1499} italic fill="#6b53a8" size={31} len={63}>Field</Label>
      <Label x={1616} y={780} italic fill="#5a8cc7" size={35} len={270}>Lake Washington</Label>
      <Label x={2339} y={932} italic fill="#5a8cc7" size={29} len={234}>Lake Sammamish</Label>
      <Label x={2409} y={63} len={200}>Cottage Lake</Label>
      <Label x={2815} y={45} len={97}>Duvall</Label>
      <Label x={2692} y={434} len={158}>ill-Novelty</Label>
      <Label x={2632} y={477} len={46}>Hill</Label>
      <Label x={3133} y={662} len={151}>Carnation</Label>
      <Label x={2568} y={913} len={190}>Sammamish</Label>
      <Label x={2563} y={1392} len={140}>Issaquah</Label>
      <Label x={3508} y={1430} len={183}>Snoqualmie</Label>
      <Label x={3074} y={1478} len={118}>Preston</Label>
      <Label x={3971} y={490} italic size={45} fill="#4f6b4a" len={235}>Snoqualmie</Label>
      <Label x={3971} y={544} italic size={45} fill="#4f6b4a" len={120}>Forest</Label>
      <Label x={4315} y={257} italic size={35} fill="#138a1c" len={170}>South Fork</Label>
      <Label x={4315} y={300} italic size={35} fill="#138a1c" len={210}>Tolt Reservoir</Label>
      <Label x={4315} y={343} italic size={35} fill="#138a1c" len={168}>Watershed</Label>
      <g transform="translate(1200 0)">
        {EXITS.map(([x, y, t], i) => (
          <Label key={i} x={x} y={y} size={31} italic fill="#960e22">
            {t}
          </Label>
        ))}
      </g>
      <path d="M1437 1396q5 5 4 14l14 12v5l-15 -5l-1 8l6 5l-8 -1l-8 1l6 -5l-1 -8l-15 5v-5l14 -12q-1 -9 4 -14z" fill="#7a62b8" />
      <Shield x={25} y={294}>WA 308</Shield>
      <Shield x={397} y={441}>WA 305</Shield>
      <Shield x={2161} y={699} pink>WA 520</Shield>
      <Shield x={2888} y={810}>WA 202</Shield>
      <Shield x={3244} y={1155}>WA 203</Shield>
      <rect x={518} y={1499} width={136} height={30} rx={4} fill="#f5e2cd" stroke="#cfa57c" strokeWidth={3} />
    </g>
  );
}

function MapCanvas() {
  return (
    <svg className="block h-full w-full font-['Noto_Sans',sans-serif]" viewBox="9 9 4899 1500" preserveAspectRatio="none">
      <defs>
        <pattern id="grid" width={44} height={35} patternUnits="userSpaceOnUse">
          <path d="M0 0H44M0 17H44M0 0V35M22 0V35" fill="none" stroke="#c6c6c8" strokeWidth={2} />
        </pattern>
        <clipPath id="seattleSouth">
          <path d="M1100 590L1250 650L1260 780L1320 750L1345 690L1480 640L1530 700L1545 740L1520 900L1500 1080L1585 1170L1630 1230L1620 1290L1575 1370L1610 1430L1605 1515L1035 1515L1030 1440L1000 1410L1030 1370L1015 1290L990 1230L945 1160L918 1110L990 1070L1040 1020L1065 990L1100 1040L1137 1075L1137 1140L1260 1140L1270 1030L1285 960L1250 905L1130 780L1090 740Z" />
        </clipPath>
        <clipPath id="mercer">
          <path d="M1645 1035Q1660 1000 1690 990L1765 990L1820 1085L1870 1090L1840 1130L1840 1380L1765 1445L1690 1370L1735 1290L1730 1180L1680 1150Z" />
        </clipPath>
      </defs>
      <rect x={0} y={0} width={4915} height={1515} fill={LAND} />
      <rect x={0} y={0} width={1290} height={1515} fill={WATER} />
      <WestShore />
      <Seattle />
      <EastSide />
      <Foothills />
      <EasternForest />
      <Roads />
      <path d="M850 9L865 85L852 150L847 215L808 260L775 350Q745 400 748 500L765 600L776 690L768 780L798 860L800 960L785 1050L768 1135L810 1240L808 1335L765 1380L755 1460L700 1490L655 1509" fill="none" stroke="#9a8fae" strokeWidth={4} strokeDasharray="18 5 4 5" />
      <Ferries />
      <path d="M860 575h22M885 597h22M888 614h24M890 631h22M900 648h22M915 664h14" stroke="#4a90e2" strokeWidth={3} />
      {PEAKS.map(([x, y], i) => (
        <path key={i} d={`M${x} ${y - 10}l12 20h-24z`} fill="#d08f55" />
      ))}
      <Labels />
    </svg>
  );
}

/* ------------------------------- Map overlay ------------------------------ */
function Pin({ className }: { className: string }) {
  return (
    <svg className={`absolute h-[34px] w-[23px] ${className}`} viewBox="0 0 23 34">
      <path fill="#2ecc71" fillRule="evenodd" d="M11.5 0.3A11.2 11.2 0 0 1 22.7 11.5C22.7 18.5 16.5 23.5 11.5 33.5C6.5 23.5 0.3 18.5 0.3 11.5A11.2 11.2 0 0 1 11.5 0.3ZM11.5 7a4.6 4.6 0 1 0 0 9.200a4.600 4.600 0 1 0 0 -9.200Z" />
    </svg>
  );
}

function SystemsMap() {
  return (
    <div className="relative h-[500px] w-full shrink-0 overflow-hidden bg-[#ddd] font-['Liberation_Sans',Arial,sans-serif]">
      <MapCanvas />
      <Pin className="left-[725px] top-[85px]" />
      <Pin className="left-[675px] top-[197px]" />
      <Pin className="left-[808px] top-[172px]" />

      <div className="absolute left-[769px] top-[72px] h-[90px] w-[104px] drop-shadow-[0_3px_7px_rgba(0,0,0,0.4)]">
        <div className="h-full rounded-xl bg-white pl-5 pt-[15px] text-base leading-5 text-[#333]">
          <p className="text-[12px] font-bold leading-[15px]">#9904394</p>
          <p>Test LLC</p>
          <a className="mt-[7px] block text-[#0078a8]">Info</a>
        </div>
        <svg className="absolute left-[41px] top-[90px] h-[11px] w-[22px]" viewBox="0 0 22 11">
          <path d="M0 0H22L11 11Z" fill="#fff" />
        </svg>
        <svg className="absolute right-[6px] top-[7px] h-[10px] w-[10px]" viewBox="0 0 10 10">
          <path d="M1 1L9 9M9 1L1 9" stroke="#c3c3c3" strokeWidth={2} />
        </svg>
      </div>

      <div className="absolute left-[10px] top-[10px] flex w-[26px] flex-col rounded bg-white shadow-[0_1px_5px_rgba(0,0,0,0.65)]">
        {["+", "−"].map((sign, i) => (
          <button key={sign} className={i === 0 ? "flex h-[26px] items-center justify-center border-b border-[#ccc]" : "flex h-[26px] items-center justify-center"}>
            <svg className="h-[10px] w-[10px]" viewBox="0 0 10 10" aria-label={sign}>
              <path d={i === 0 ? "M0 5H10M5 0V10" : "M0 5H10"} stroke="#000" strokeWidth={2.2} />
            </svg>
          </button>
        ))}
      </div>

      <p className="absolute bottom-0 right-0 h-4 overflow-hidden whitespace-nowrap bg-white/70 px-[5px] text-[11px] leading-4 text-[#333]">
        <a className="text-[#0078a8]">Leaflet</a> | Map data © <a className="text-[#0078a8]">OpenStreetMap</a> contributors, <a className="text-[#0078a8]">CC-BY-SA</a>, Imagery © <a className="text-[#0078a8]">Mapbox</a>
      </p>
      <p className="absolute bottom-0 right-0 h-4 whitespace-nowrap bg-white/70 px-[5px] text-[11px] leading-4 text-[#333]">
        <a className="text-[#0078a8]">Leaflet</a> | Map data © <a className="text-[#0078a8]">OpenStreetMap</a> contributors, <a className="text-[#0078a8]">CC-BY-SA</a>
      </p>
    </div>
  );
}

/* --------------------------------- Sidebar -------------------------------- */
const NAV = [
  { label: "Reports", icon: FaClipboardCheck },
  { label: "Systems", icon: FaFireExtinguisher },
  { label: "Profile", icon: FaInfo, more: true },
  { label: "Personnel", icon: FaUsers, more: true },
  { label: "Billing", icon: FaCreditCard },
  { label: "Help", icon: FaQuestion },
];

function Sidebar() {
  return (
    <aside className="flex w-[219px] shrink-0 flex-col bg-[linear-gradient(180deg,#5a5c69_10%,#373840_100%)] bg-[length:100%_1180px] pl-[11px] pr-4 text-[13.6px] text-white/80">
      <div className="flex h-14 items-center whitespace-nowrap pt-px">
        <FaHome className="mr-[5px] h-[14px] w-4 shrink-0 text-white/30" />
        Compliancy App Dashboard
      </div>
      <hr className="border-white/15" />
      <h2 className="mt-4 text-[10.4px] font-extrabold leading-4 text-white/40">VIEW</h2>
      <nav className="-mb-px">
        {NAV.map(({ label, icon: Icon, more }) => (
          <a key={label} className="flex h-14 items-center">
            <Icon className="mr-2 h-[14px] w-[17px] shrink-0 text-white/30" />
            {label}
            {more && <FaAngleRight className="mb-0.5 ml-auto mr-[3px] h-4 w-[11px] text-white/60" />}
          </a>
        ))}
      </nav>
      <hr className="border-white/15" />
    </aside>
  );
}

/* ---------------------------------- Table --------------------------------- */
const COLUMNS = [
  { label: "ID", width: "w-[254px]" },
  { label: "Jurisdiction", width: "w-[278px]" },
  { label: "Type", width: "w-[183px]" },
  { label: "Owner", width: "w-[243px]", sorted: true },
  { label: "Date", width: "w-[229px]" },
  { label: "Brand", width: "w-[234px]" },
  { label: "Tag", width: "w-[169px]" },
];

const ROWS = [
  { id: "884106", cells: ["test2", "fire-hood", "Testraunt LLC", "2019-12-26", "Range Guard"], tag: "Yellow", tagClass: "text-[#f6c23e]", bg: "bg-[#f2f2f2]" },
  { id: "5465457", cells: ["test", "fire-hood", "TEST5 LLC", "2021-01-12", "Ansul"], tag: "White", tagClass: "text-[#5a5c69]", bg: "bg-white" },
];

function SortArrows({ sorted }: { sorted?: boolean }) {
  return (
    <svg className="ml-auto h-4 w-4" viewBox="0 0 16 16" fill="none" stroke="#858796">
      <path d="M4.500 15V2M2 4.500L4.500 1.500L7 4.500" strokeOpacity={0.3} />
      <path d="M11.500 1V14M9 11.500L11.500 14.500L14 11.500" strokeOpacity={sorted ? 1 : 0.3} />
    </svg>
  );
}

function SystemsTable() {
  return (
    <table className="w-full table-fixed border-collapse border border-[#e3e6f0] text-left">
      <thead>
        <tr className="h-[50px] border-b-[3px] border-t-2 border-[#e3e6f0]">
          {COLUMNS.map((c) => (
            <th key={c.label} className={`${c.width} border-x border-[#e3e6f0] pl-3 pr-2 font-bold`}>
              <span className="flex items-center">
                {c.label}
                <FaSort className="ml-1 h-4 w-[11px]" />
                <SortArrows sorted={c.sorted} />
              </span>
            </th>
          ))}
        </tr>
      </thead>
      <tbody className="align-top font-light">
        {ROWS.map((row) => (
          <tr key={row.id} className={`h-[65px] border-b border-[#e3e6f0] ${row.bg}`}>
            <td className="border-x border-[#e3e6f0] p-3">
              <span className="flex items-center">
                <button className="mr-1 flex h-[38px] w-8 items-center justify-center rounded-[5px] bg-[#1cc88a] text-white">
                  <FaInfo className="h-4 w-4" />
                </button>
                <span className="-mt-0.5">{row.id}</span>
              </span>
            </td>
            {row.cells.map((cell, i) => (
              <td key={i} className="border-x border-[#e3e6f0] p-3">
                {cell}
              </td>
            ))}
            <td className={`border-x border-[#e3e6f0] p-3 ${row.tagClass}`}>{row.tag}</td>
          </tr>
        ))}
      </tbody>
    </table>
  );
}

export default function App() {
  return (
    <div className="flex h-[945px] flex-col overflow-hidden border-t border-[#5a5c69] bg-[#f8f9fc] font-[Nunito,Lato,sans-serif] text-base leading-6 text-[#858796]">
      <div className="flex min-h-0 flex-1">
        <Sidebar />
        <main className="flex min-w-0 flex-1 flex-col pl-6 pr-[18px] pt-8">
          <h1 className="mb-6 shrink-0 text-[28px] leading-[34px] text-[#1cc88a]">Systems</h1>
          <SystemsMap />
          <hr className="mt-4 shrink-0 border-[#dddfe4]" />
          <section className="mt-10 shrink-0 rounded-[5px] border border-[#e3e6f0] bg-white shadow-[0_2px_28px_rgba(58,59,69,0.15)]">
            <header className="flex h-[52px] items-center rounded-t border-b border-[#e3e6f0] bg-[#f8f9fc] px-5 pb-0.5">
              <h2 className="font-bold text-[#1cc88a]">Systems</h2>
            </header>
            <div className="px-5 pt-[19px]">
              <div className="mb-[14px] flex h-8 items-center justify-between">
                <label className="flex items-center">
                  <span className="-mt-0.5">Show</span>
                  <span className="mx-1 flex h-[31px] w-16 items-center justify-between rounded border border-[#d1d3e2] bg-white pl-2 pr-3 text-sm text-[#6e707e]">
                    10
                    <svg className="h-[10px] w-2" viewBox="0 0 8 10" fill="#4b4d5a">
                      <path d="M4 0L8 4H0ZM4 10L0 6H8Z" />
                    </svg>
                  </span>
                  <span className="-mt-0.5">entries</span>
                </label>
                <label className="flex items-center">
                  Search:
                  <input className="ml-[7px] h-[31px] w-[194px] rounded border border-[#d1d3e2] bg-white" />
                </label>
              </div>
              <SystemsTable />
            </div>
          </section>
        </main>
      </div>
    </div>
  );
}
